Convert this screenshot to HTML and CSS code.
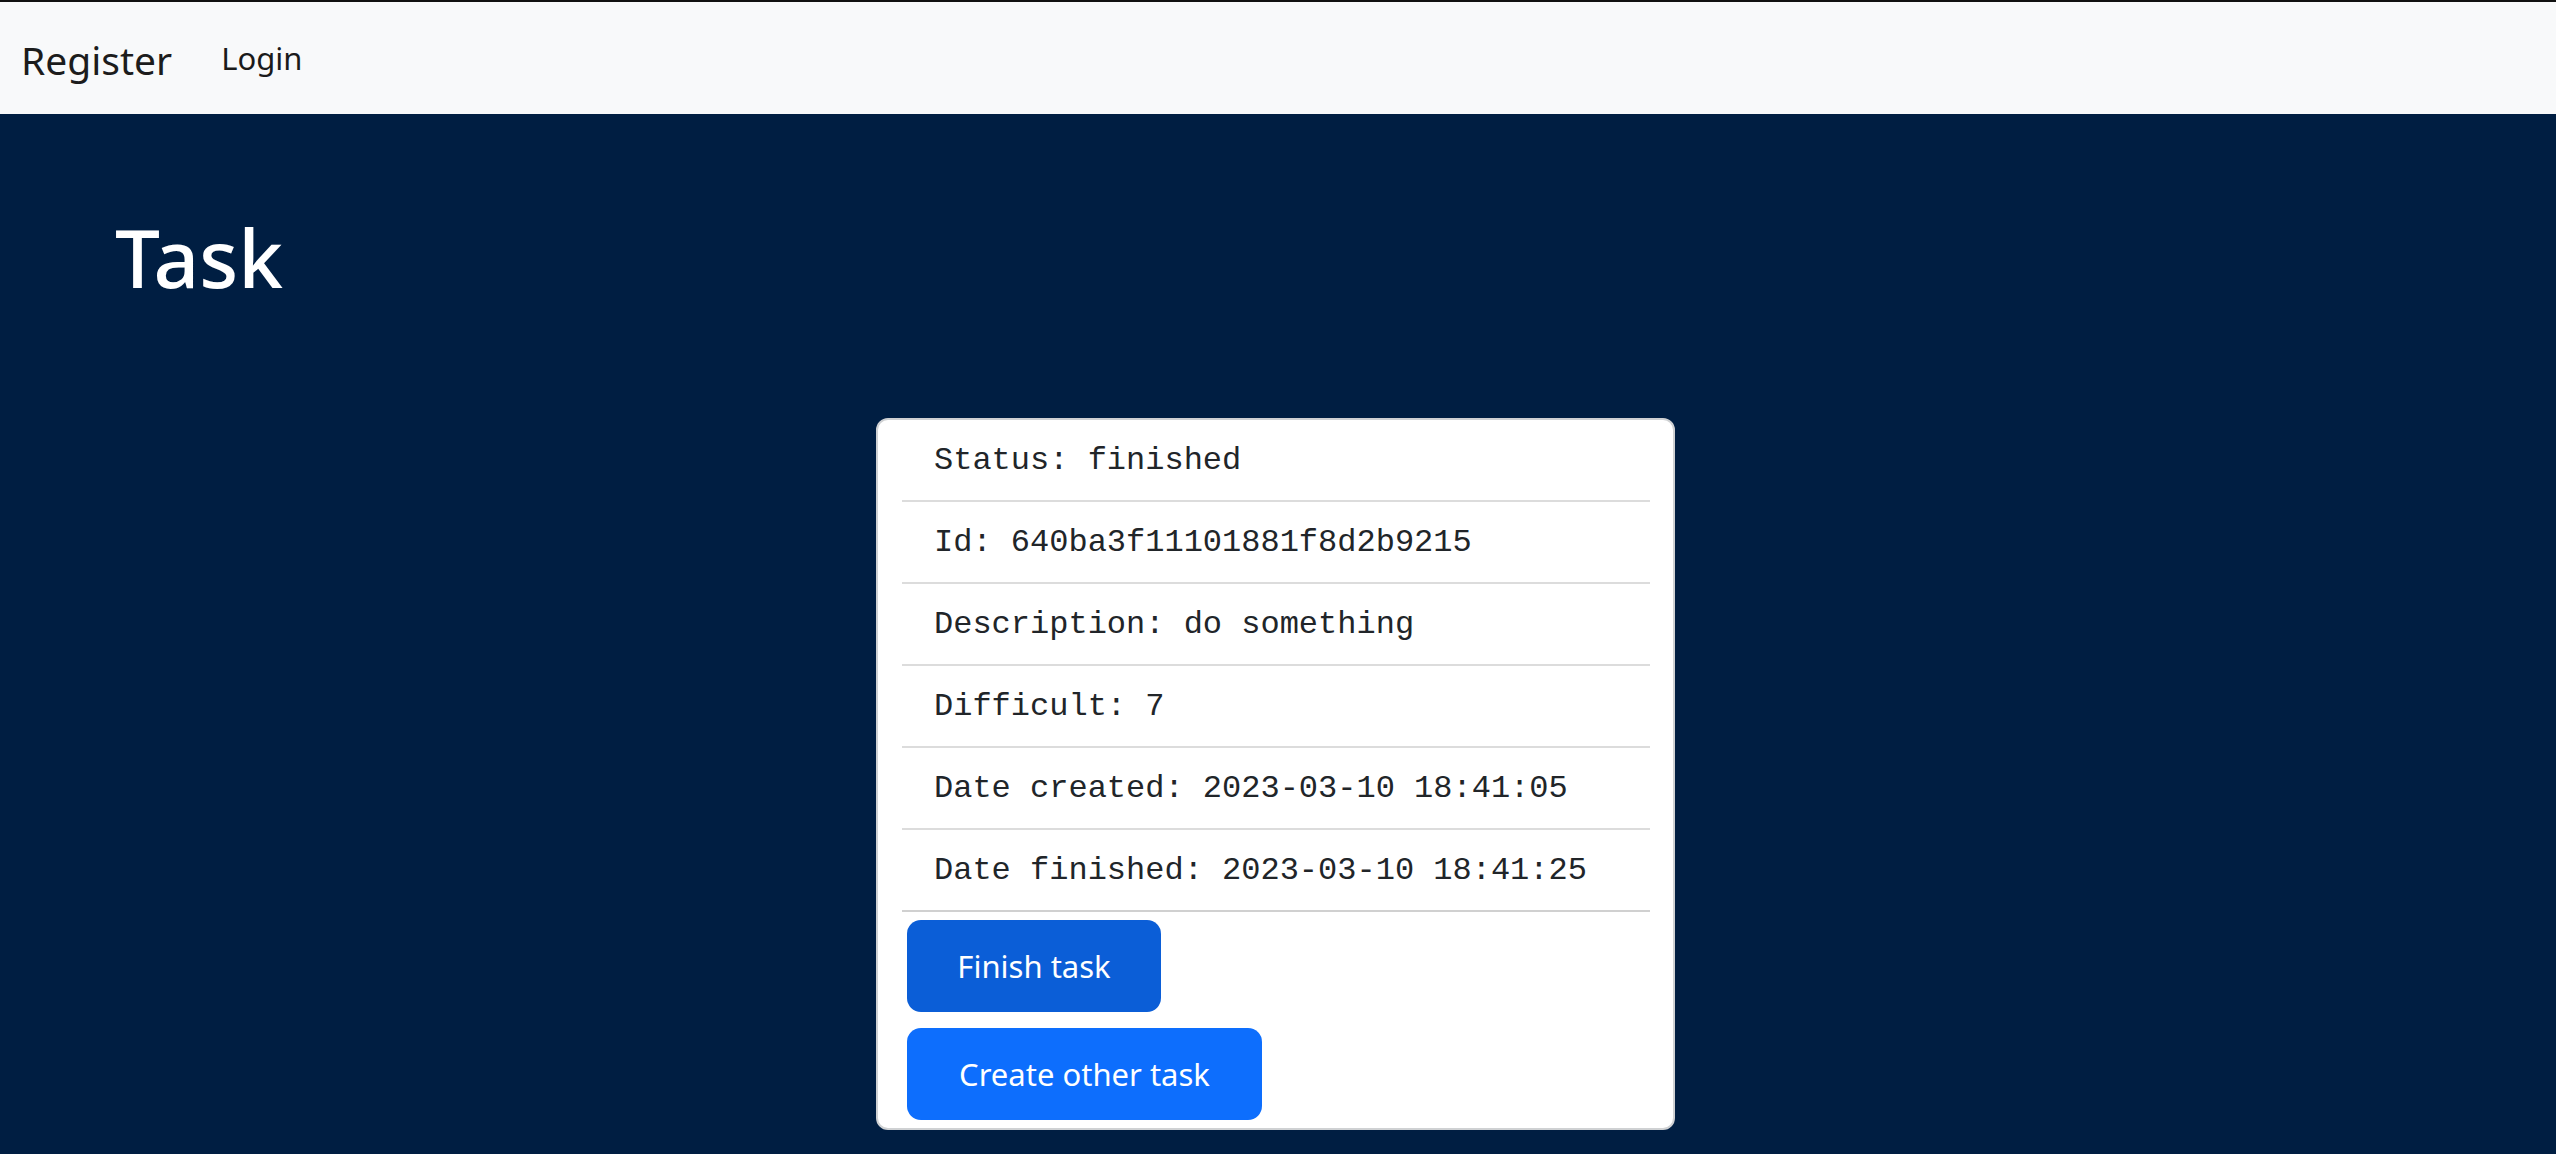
FILE: index.html
```html
<!DOCTYPE html>
<html lang="en">
<head>
<meta charset="utf-8">
<title>Task</title>
<link rel="stylesheet" href="styles.css">
</head>
<body>
<nav class="navbar">
  <a class="brand" href="#">Register</a>
  <a class="nav-link" href="#">Login</a>
</nav>
<main class="main">
  <h1 class="title">Task</h1>
  <div class="card">
    <ul class="list">
      <li class="item">Status: finished</li>
      <li class="item">Id: 640ba3f11101881f8d2b9215</li>
      <li class="item">Description: do something</li>
      <li class="item">Difficult: 7</li>
      <li class="item">Date created: 2023-03-10 18:41:05</li>
      <li class="item item-last">Date finished: 2023-03-10 18:41:25</li>
    </ul>
    <button class="btn btn-finish">Finish task</button>
    <button class="btn btn-create">Create other task</button>
  </div>
</main>
</body>
</html>
```
FILE: styles.css
```css
* { box-sizing: border-box; }
html, body {
  margin: 0;
  padding: 0;
  background: #001e42;
  font-family: "Noto Sans", "Open Sans", sans-serif;
}
.navbar {
  display: flex;
  align-items: center;
  height: 114px;
  border-top: 2px solid #111111;
  background: #f8f9fa;
  padding-left: 21px;
}
.brand {
  font-size: 39px;
  color: #1c1c1c;
  text-decoration: none;
  margin-right: 49px;
  margin-top: 2px;
}
.nav-link {
  font-size: 31px;
  color: #1a1a1a;
  text-decoration: none;
}
.main {
  min-height: 1040px;
  padding-top: 95px;
}
.title {
  margin: 0 0 113px 0;
  padding-left: 115px;
  color: #ffffff;
  font-size: 80px;
  font-weight: 500;
  line-height: 1.2;
}
.card {
  width: 799px;
  margin: 0 auto 0 876px;
  background: #ffffff;
  border: 2px solid #cfd1d3;
  border-radius: 12px;
  padding: 0 23px 8px 24px;
}
.list {
  list-style: none;
  margin: 0;
  padding: 0;
}
.item {
  display: flex;
  align-items: center;
  height: 82px;
  padding-left: 32px;
  border-bottom: 2px solid #dcdcdc;
  font-family: "Liberation Mono", monospace;
  font-size: 32px;
  color: #212529;
}
.item-last {
  border-bottom-color: #d0d0d0;
}
.btn {
  display: block;
  height: 92px;
  padding: 0 50px;
  margin: 8px 0 0 5px;
  border: none;
  border-radius: 14px;
  color: #ffffff;
  font-family: "Noto Sans", "Open Sans", sans-serif;
  font-size: 31px;
  line-height: 1;
}
.btn-finish {
  width: 254px;
  background: #0b5ed7;
}
.btn-create {
  width: 355px;
  margin-top: 16px;
  background: #0d6efd;
}
```
